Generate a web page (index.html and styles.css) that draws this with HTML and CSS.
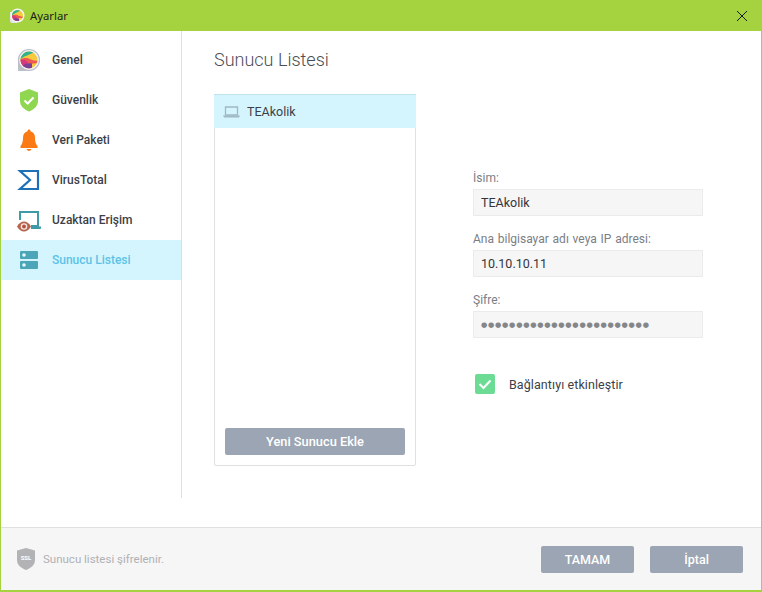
FILE: index.html
```html
<!DOCTYPE html>
<html lang="tr">
<head>
<meta charset="utf-8">
<title>Ayarlar</title>
<link rel="stylesheet" href="styles.css">
</head>
<body>
<div class="window">
  <header class="titlebar">
    <svg class="app-icon" width="16" height="16" viewBox="0 0 16 16">
      <defs><clipPath id="c1"><circle cx="8.500" cy="7.500" r="5.500"/></clipPath></defs>
      <path d="M1 4h7v11H3a2 2 0 0 1-2-2z" fill="#e4e4e6"/>
      <circle cx="8.500" cy="7.500" r="7" fill="#f6f6f6"/>
      <g clip-path="url(#c1)">
        <rect x="3" y="2" width="11" height="11" fill="#f6c93f"/>
        <path d="M3 8C5 5 9 4 13 2V1H2z" fill="#2fb48e"/>
        <path d="M2 8.500C5 6 8 6.500 10 8l5 1v1H10L2 12z" fill="#ee5a50"/>
        <path d="M2 8C5 7 7 8 8 10L5 14H2z" fill="#d5397f"/>
        <path d="M4 11.500C6 10 8 10 10 10.500V14H4z" fill="#7d3f95"/>
      </g>
    </svg>
    <span class="title">Ayarlar</span>
    <svg class="close" width="10" height="10" viewBox="0 0 10 10"><path d="M0 0l10 10M10 0L0 10" stroke="#1a1a1a" stroke-width="1" fill="none"/></svg>
  </header>
  <div class="body">
    <nav class="sidebar">
      <div class="nav-item">
        <svg width="24" height="24" viewBox="0 0 24 24">
          <defs><clipPath id="c2"><circle cx="12" cy="12" r="8.500"/></clipPath></defs>
          <path d="M1 12v11h12z" fill="#bcc0c7"/>
          <circle cx="12" cy="12" r="10.500" fill="#f4f4f6" stroke="#b9bdc7" stroke-width="1.200"/>
          <g clip-path="url(#c2)">
            <rect x="3" y="3" width="18" height="18" fill="#f6c93f"/>
            <path d="M3 12C6 8 12 7.500 19 3V2H2z" fill="#2fb48e"/>
            <path d="M2 12.500C6 9 11 9.500 14 11.500c2 1 4 1.500 7 1V15l-9 1L3 18z" fill="#ee5a50"/>
            <path d="M2 12C6 10.500 9.500 12 11 15L6 21H2z" fill="#d5397f"/>
            <path d="M5 18c3-2.500 6-3 10-2.500V22H5z" fill="#7d3f95"/>
          </g>
        </svg>
        <span>Genel</span>
      </div>
      <div class="nav-item">
        <svg width="24" height="24" viewBox="0 0 24 24">
          <path d="M12 1l9 3.500V13c0 5-4 8.500-9 10.500C7 21.500 3 18 3 13V4.500z" fill="#8fd651"/>
          <path d="M7.500 12.500l3.200 3 5.800-6" stroke="#fff" stroke-width="2.200" fill="none"/>
        </svg>
        <span>Güvenlik</span>
      </div>
      <div class="nav-item">
        <svg width="24" height="24" viewBox="0 0 24 24">
          <path d="M12 1.500c1 0 1.500.7 1.500 1.700 3 .8 4.500 3.300 4.500 6.300 0 4 .7 6.500 2.500 8.500V20h-17v-2c1.800-2 2.500-4.500 2.500-8.500 0-3 1.500-5.500 4.500-6.300 0-1 .5-1.700 1.500-1.700z" fill="#fb7a14"/>
          <path d="M9.500 21h5c-.5 1.300-1.300 2-2.500 2s-2-.7-2.500-2z" fill="#fb7a14"/>
        </svg>
        <span>Veri Paketi</span>
      </div>
      <div class="nav-item">
        <svg width="24" height="24" viewBox="0 0 24 24">
          <path d="M3 3h18v18H3L13 12z" fill="none" stroke="#1f6fb8" stroke-width="2.200"/>
        </svg>
        <span>VirusTotal</span>
      </div>
      <div class="nav-item">
        <svg width="24" height="24" viewBox="0 0 24 24">
          <path d="M3 12V4h18v14h-7" fill="none" stroke="#3f9aa8" stroke-width="2"/>
          <path d="M14 18.500h10V20a1 1 0 0 1-1 1h-9z" fill="#3f9aa8"/>
          <path d="M0 18.500C2 15 4.500 13.500 7 13.500s5 1.500 7 5c-2 3.500-4.500 5-7 5s-5-1.500-7-5z" fill="#b5654f"/>
          <circle cx="7" cy="18.500" r="3.300" fill="#f6e8e2"/>
          <circle cx="7" cy="18.500" r="1.900" fill="#b5503f"/>
        </svg>
        <span>Uzaktan Erişim</span>
      </div>
      <div class="nav-item active">
        <svg width="24" height="24" viewBox="0 0 24 24">
          <rect x="3" y="3" width="18" height="8" rx="1" fill="#4da6b8"/>
          <rect x="3" y="13" width="18" height="8" rx="1" fill="#4da6b8"/>
          <circle cx="7" cy="7" r="1.800" fill="#e6f8fc"/>
          <circle cx="7" cy="17" r="1.800" fill="#e6f8fc"/>
        </svg>
        <span>Sunucu Listesi</span>
      </div>
    </nav>
    <main class="content">
      <h1 class="heading">Sunucu Listesi</h1>
      <div class="columns">
        <section class="server-panel">
          <div class="server-row">
            <svg width="17" height="12" viewBox="0 0 17 12">
              <path d="M2.500 1h12v8h-12z" fill="none" stroke="#9fb8c2" stroke-width="1.300"/>
              <path d="M0 9.500h17l-1 2H1z" fill="#9fb8c2"/>
            </svg>
            <span>TEAkolik</span>
          </div>
          <button class="btn btn-add">Yeni Sunucu Ekle</button>
        </section>
        <section class="form">
          <label class="field-label first">İsim:</label>
          <div class="input">TEAkolik</div>
          <label class="field-label">Ana bilgisayar adı veya IP adresi:</label>
          <div class="input">10.10.10.11</div>
          <label class="field-label">Şifre:</label>
          <div class="input password">●●●●●●●●●●●●●●●●●●●●●●●●</div>
          <div class="check-row">
            <svg class="check" width="20" height="20" viewBox="0 0 20 20">
              <rect width="20" height="20" rx="2" fill="#6cdb94"/>
              <path d="M4.500 10l4 4 7-7.500" stroke="#fff" stroke-width="2" fill="none"/>
            </svg>
            <span>Bağlantıyı etkinleştir</span>
          </div>
        </section>
      </div>
    </main>
  </div>
  <footer class="footer">
    <svg class="ssl" width="18" height="22" viewBox="0 0 18 22">
      <path d="M9 0l9 2.500V12c0 5-4 8-9 10-5-2-9-5-9-10V2.500z" fill="#b3b3b5"/>
      <text x="9" y="11.500" text-anchor="middle" class="ssl-text">SSL</text>
    </svg>
    <span class="note">Sunucu listesi şifrelenir.</span>
    <button class="btn btn-foot ok">TAMAM</button>
    <button class="btn btn-foot">İptal</button>
  </footer>
</div>
</body>
</html>
```
FILE: styles.css
```css
* { box-sizing: border-box; }
html, body { margin: 0; padding: 0; }
body {
  width: 762px;
  height: 592px;
  overflow: hidden;
  background: #fff;
  font-family: Roboto, "Liberation Sans", sans-serif;
  font-size: 12px;
  color: #3c3f47;
}
.window {
  width: 762px;
  height: 592px;
  display: flex;
  flex-direction: column;
  border: 1px solid #a5d33f;
  border-top: 0;
  border-bottom-width: 2px;
}
.titlebar {
  height: 31px;
  margin: 0 -1px;
  background: #a5d33f;
  display: flex;
  align-items: center;
  padding: 0 16px 0 9px;
  color: #1c1c1c;
  font-family: "Noto Sans", "Liberation Sans", sans-serif;
  font-size: 11.300px;
  flex: none;
}
.app-icon { margin-right: 5px; }
.title { flex: 1; }
.close { margin-right: -1px; }
.body {
  flex: 1;
  display: flex;
  min-height: 0;
}
.sidebar {
  width: 181px;
  height: 467px;
  border-right: 1px solid #dedfe1;
  padding-top: 9px;
  flex: none;
}
.nav-item {
  height: 40px;
  display: flex;
  align-items: center;
  padding-left: 16px;
  gap: 11px;
  font-weight: 500;
  color: #3c3f47;
}
.nav-item svg { flex: none; }
.nav-item.active {
  background: #d4f5fe;
  color: #5cc3e6;
}
.content {
  flex: 1;
  padding: 17px 0 0 32px;
}
.heading {
  margin: 0;
  font-size: 18px;
  line-height: 24px;
  font-weight: 300;
  color: #4a4d55;
}
.columns {
  display: flex;
  margin-top: 22px;
}
.server-panel {
  width: 202px;
  height: 372px;
  border: 1px solid #dfe0e2;
  border-radius: 2px;
  display: flex;
  flex-direction: column;
  align-items: center;
}
.server-row {
  align-self: stretch;
  height: 34px;
  background: #d4f5fe;
  display: flex;
  align-items: center;
  gap: 7px;
  padding-left: 9px;
  margin: -1px -1px 0;
  border-top: 1px solid #bfe3ea;
  font-size: 12.500px;
  color: #3c3f47;
}
.btn {
  border: 0;
  border-radius: 2px;
  background: #9ca5b3;
  color: #fff;
  font-family: inherit;
  font-size: 12px;
  font-weight: 500;
  padding: 0;
}
.btn-add {
  width: 180px;
  height: 27px;
  margin-top: auto;
  margin-bottom: 10px;
  padding-bottom: 1px;
  font-size: 12.800px;
}
.form {
  width: 230px;
  margin-left: 57px;
  padding-top: 76px;
}
.field-label {
  display: block;
  font-size: 12px;
  word-spacing: 0.800px;
  line-height: 16px;
  color: #7b7e85;
  margin: 15px 0 3px;
}
.field-label.first { margin-top: 0; }
.input {
  height: 27px;
  background: #f6f6f6;
  border: 1px solid #ebebec;
  display: flex;
  align-items: center;
  padding-left: 7px;
  font-size: 12.500px;
  color: #33353b;
}
.input.password {
  font-size: 7.200px;
  letter-spacing: 0.105em;
  color: #85868a;
  font-family: "DejaVu Sans", sans-serif;
}
.check-row {
  display: flex;
  align-items: center;
  gap: 14px;
  margin: 36px 0 0 2px;
  font-size: 12.500px;
  letter-spacing: 0.080px;
  color: #3c3f47;
}
.footer {
  height: 63px;
  flex: none;
  background: #f6f6f7;
  border-top: 1px solid #e0e0e1;
  display: flex;
  align-items: center;
  padding: 0 18px 0 16px;
}
.ssl { margin-right: 8px; }
.ssl-text {
  font-family: Roboto, sans-serif;
  font-size: 6px;
  font-weight: 700;
  fill: #fff;
}
.note {
  flex: 1;
  font-size: 11.500px;
  color: #b0b1b4;
}
.btn-foot {
  width: 93px;
  height: 27px;
  font-size: 12.500px;
}
.btn-foot.ok { margin-right: 16px; }
```
